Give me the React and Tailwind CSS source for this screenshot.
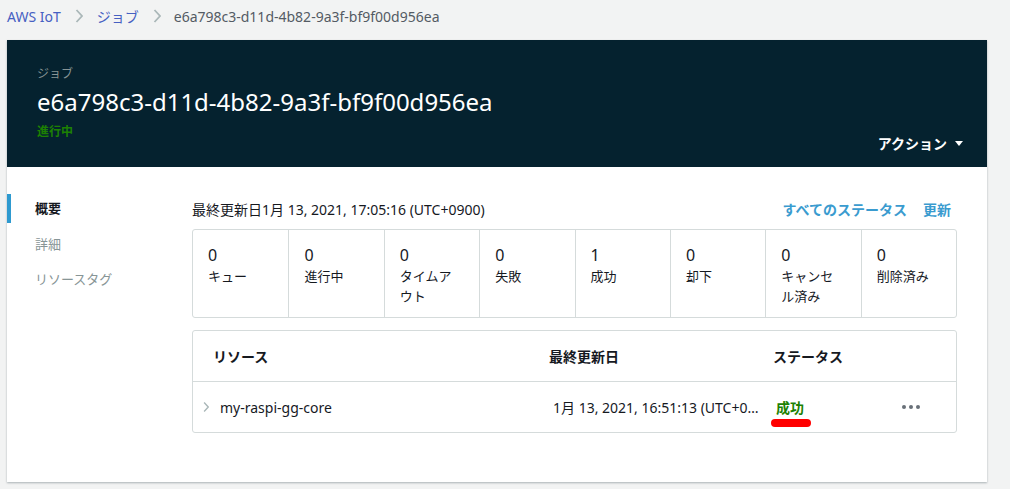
import React from "react";

const font = { fontFamily: '"Noto Sans", "Noto Sans CJK JP", sans-serif' };

const STATS = [
  { n: 0, label: "キュー" },
  { n: 0, label: "進行中" },
  { n: 0, label: "タイムアウト" },
  { n: 0, label: "失敗" },
  { n: 1, label: "成功" },
  { n: 0, label: "却下" },
  { n: 0, label: "キャンセル済み" },
  { n: 0, label: "削除済み" },
];

const Chevron = ({ className }) => (
  <svg className={className} width="8" height="14" viewBox="0 0 8 14" fill="none" stroke="currentColor" strokeWidth="1.8">
    <path d="M1.5 1 L7 7 L1.5 13" />
  </svg>
);

export default function App() {
  return (
    <div className="w-[1010px] h-[489px] bg-[#f2f3f3] text-[#16191f] overflow-hidden" style={font}>
      {/* breadcrumb */}
      <div className="h-10 flex items-center pl-[7px] pb-2 gap-[14px] text-[14px]">
        <span className="text-[#4660c2]">AWS IoT</span>
        <Chevron className="text-[#aab7b8]" />
        <span className="text-[#4660c2]">ジョブ</span>
        <Chevron className="text-[#aab7b8]" />
        <span className="text-[#545b64] -ml-[1px]">e6a798c3-d11d-4b82-9a3f-bf9f00d956ea</span>
      </div>

      <div className="ml-[7px] w-[980px] h-[442px] bg-white shadow-[0_1px_2px_rgba(0,28,36,0.3)]">
        {/* header */}
        <div className="h-[127px] bg-[#05222f] relative pl-[30px] pt-[26px]">
          <div className="text-[12px] text-[#879596] leading-4">ジョブ</div>
          <div className="text-[24px] text-white leading-8 mt-[4px]">e6a798c3-d11d-4b82-9a3f-bf9f00d956ea</div>
          <div className="text-[12px] font-bold text-[#1d8102] leading-4 mt-[6px]">進行中</div>
          <div className="absolute right-[24px] top-[93px] flex items-center gap-2 text-white text-[14px] font-bold">
            アクション
            <svg width="8" height="5" viewBox="0 0 8 5"><path d="M0 0h8L4 5z" fill="#fff" /></svg>
          </div>
        </div>

        {/* body */}
        <div className="flex pt-[27px]">
          <nav className="w-[185px] shrink-0 text-[13px]">
            <div className="flex items-center h-[29px] border-l-4 border-[#2e9ad0] pl-[24px] font-bold text-[#16191f]">概要</div>
            <div className="flex items-center h-[35px] pl-[28px] text-[#879596] mt-[4px]">詳細</div>
            <div className="flex items-center h-[35px] pl-[28px] text-[#879596]">リソースタグ</div>
          </nav>

          <div className="w-[765px] mt-[2px]">
            <div className="flex items-center justify-between h-[26px]">
              <div className="text-[14px]">最終更新日1月 13, 2021, 17:05:16 (UTC+0900)</div>
              <div className="flex gap-4 text-[14px] font-bold text-[#3a9bcf] pr-[6px]">
                <span>すべてのステータス</span>
                <span>更新</span>
              </div>
            </div>

            <div className="mt-[7px] grid grid-cols-8 border border-[#d5dbdb] rounded-[3px] h-[89px]">
              {STATS.map((s, i) => (
                <div key={i} className={`pl-[15px] pr-[22px] pt-[15px] ${i > 0 ? "border-l border-[#d5dbdb]" : ""}`}>
                  <div className="text-[16px] leading-5">{s.n}</div>
                  <div className="text-[13px] leading-[20px] mt-[1px]">{s.label}</div>
                </div>
              ))}
            </div>

            <div className="mt-[12px] border border-[#d5dbdb] rounded-[3px]">
              <div className="flex h-[51px] items-center border-b border-[#d5dbdb] text-[14px] font-bold">
                <div className="w-[356px] pl-[20px]">リソース</div>
                <div className="w-[224px]">最終更新日</div>
                <div>ステータス</div>
              </div>
              <div className="flex h-[50px] items-center text-[14px]">
                <div className="w-[360px] pl-[10px] flex items-center gap-[11px]">
                  <Chevron className="text-[#aab7b8] w-[6px]" />
                  <span>my-raspi-gg-core</span>
                </div>
                <div className="w-[222px] truncate pr-[10px]">1月 13, 2021, 16:51:13 (UTC+0900)</div>
                <div className="w-[127px] relative">
                  <span className="font-bold text-[#1d8102] pl-[1px]">成功</span>
                  <div className="absolute left-[-4px] top-[22px] w-[40px] h-[8px] rounded-full bg-[#ff0000]" />
                </div>
                <div className="flex gap-[3px]">
                  {[0, 1, 2].map((d) => (
                    <span key={d} className="w-[4px] h-[4px] rounded-full bg-[#687078]" />
                  ))}
                </div>
              </div>
            </div>
          </div>
        </div>
      </div>
    </div>
  );
}
